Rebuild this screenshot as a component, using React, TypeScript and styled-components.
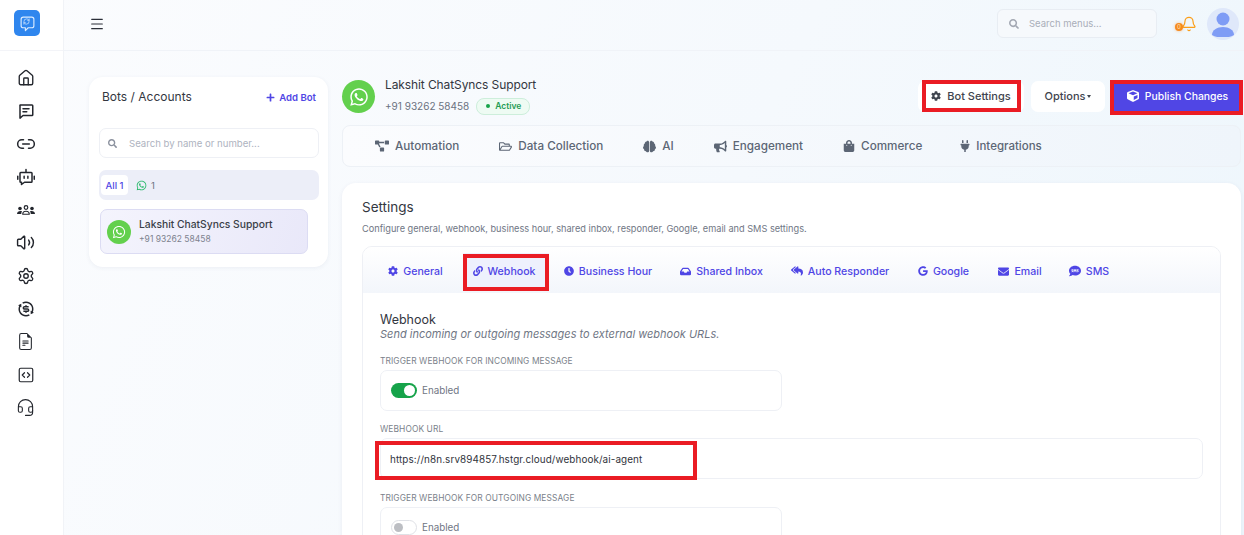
import styled, { createGlobalStyle } from "styled-components";
import { House, Link2, Volume2, Settings as Gear, SquareCode, Headset, Bell, Menu, RefreshCw } from "lucide-react";
import { RiExchangeDollarLine } from "react-icons/ri";
import { BsFileEarmarkText } from "react-icons/bs";
import {
  FaBrain, FaBullhorn, FaClock, FaCog, FaCube, FaEnvelope, FaGoogle, FaInbox, FaLink, FaPlug,
  FaPlus, FaProjectDiagram, FaRegFolderOpen, FaReplyAll, FaSearch, FaShoppingBag, FaSms, FaWhatsapp,
} from "react-icons/fa";

const Global = createGlobalStyle`
  html, body { margin: 0; height: 100%; overflow: hidden; }
  body { font-family: "Inter", "Liberation Sans", sans-serif; color: #2b2f38; }
  #root { height: 100%; }
`;

const Page = styled.div`
  display: flex;
  height: 535px;
  overflow: hidden;
  background: linear-gradient(115deg, #fbfcfe 0%, #f5f9fd 55%, #edf6fc 100%);
`;

const Sidebar = styled.aside`
  width: 63px;
  flex: none;
  background: #fff;
  border-right: 1px solid #f1f3f7;
  display: flex;
  flex-direction: column;
  align-items: center;
`;

const LogoRow = styled.div`
  height: 51px;
  width: 100%;
  box-sizing: border-box;
  display: flex;
  justify-content: flex-start;
  padding: 10px 0 0 14px;
  border-bottom: 1px solid #f3f4f8;
`;

const Logo = styled.div`
  position: relative;
  width: 26px;
  height: 26px;
  border-radius: 5px;
  background: #2f86ee;
  color: #dcecff;
  display: flex;
  align-items: center;
  justify-content: center;
`;

const LogoInner = styled.span`
  position: absolute;
  left: 9px;
  top: 8px;
  display: flex;
  color: #dcecff;
`;

const SideNav = styled.nav`
  display: flex;
  flex-direction: column;
  align-items: center;
  padding-top: 10px;
  margin-right: 12px;
  color: #23262d;
`;

const SideItem = styled.div`
  height: 33px;
  display: flex;
  align-items: center;
  justify-content: center;
`;

const Main = styled.div`
  flex: 1;
  min-width: 0;
  display: flex;
  flex-direction: column;
`;

const Topbar = styled.header`
  height: 51px;
  flex: none;
  box-sizing: border-box;
  border-bottom: 1px solid #f0f3f8;
  display: flex;
  align-items: center;
  padding: 0 5px 3px 25px;
  color: #2b2f38;
`;

const Spacer = styled.div`
  flex: 1;
`;

const TopSearch = styled.div`
  width: 160px;
  height: 29px;
  box-sizing: border-box;
  background: #f6f9fc;
  border: 1px solid #e8edf3;
  border-radius: 6px;
  display: flex;
  align-items: center;
  gap: 10px;
  padding-left: 11px;
  font-size: 9.5px;
  color: #a9aeb9;
  margin-right: 18px;
`;

const BellWrap = styled.div`
  position: relative;
  width: 22px;
  height: 16px;
  color: #fb9f1a;
  margin-right: 10px;
  display: flex;
  justify-content: flex-end;
`;

const BellCount = styled.span`
  position: absolute;
  left: 0;
  top: 7px;
  width: 8px;
  height: 8px;
  border-radius: 50%;
  background: #f58a1f;
  box-shadow: 0 0 3px rgba(245, 138, 31, 0.5);
  color: #ffe3b8;
  font-size: 6px;
  line-height: 8px;
  text-align: center;
`;

const TopAvatar = styled.div`
  width: 32px;
  height: 32px;
  border-radius: 50%;
  background: #dfe8fa;
  display: flex;
  align-items: center;
  justify-content: center;
`;

const Content = styled.main`
  display: flex;
  align-items: flex-start;
  gap: 14px;
  padding: 26px 3px 0 25px;
`;

const BotsCard = styled.section`
  width: 239px;
  flex: none;
  box-sizing: border-box;
  height: 190px;
  background: #fff;
  border-radius: 14px;
  box-shadow: 0 1px 4px rgba(60, 70, 110, 0.07);
  padding: 12px 9px 12px 10px;
`;

const BotsHead = styled.div`
  display: flex;
  justify-content: space-between;
  align-items: flex-start;
  padding: 0 3px;
  height: 39px;
`;

const BotsTitle = styled.h2`
  margin: 0;
  font-size: 12px;
  font-weight: 400;
  line-height: 16px;
  color: #33373f;
`;

const AddBot = styled.a`
  display: flex;
  align-items: center;
  gap: 4px;
  font-size: 9.6px;
  font-weight: 600;
  color: #4f46e5;
  padding-top: 3px;
`;

const BotSearch = styled.div`
  height: 30px;
  box-sizing: border-box;
  border: 1px solid #eef0f5;
  border-radius: 7px;
  display: flex;
  align-items: center;
  gap: 12px;
  padding-left: 8px;
  font-size: 9.6px;
  color: #aeb3c0;
  margin-bottom: 12px;
`;

const FilterBar = styled.div`
  height: 30px;
  box-sizing: border-box;
  background: #eceef8;
  border-radius: 7px;
  display: flex;
  align-items: center;
  gap: 8px;
  padding: 0 2px;
  font-size: 9.5px;
  color: #6b7280;
  margin-bottom: 9px;
`;

const FilterAll = styled.span`
  width: 27px;
  height: 20px;
  border-radius: 4px;
  background: #fff;
  color: #4f46e5;
  font-weight: 500;
  display: flex;
  align-items: center;
  justify-content: center;
`;

const FilterCount = styled.span`
  display: flex;
  align-items: center;
  gap: 4px;
`;

const BotRow = styled.div`
  width: 208px;
  height: 45px;
  margin-left: 1px;
  box-sizing: border-box;
  border: 1px solid #dcdcf3;
  border-radius: 7px;
  background: linear-gradient(110deg, #f4f4fd, #e9e8f9);
  display: flex;
  align-items: center;
  gap: 8px;
  padding-left: 6px;
`;

const WaCircle = styled.div<{ $size: number }>`
  width: ${(p) => p.$size}px;
  height: ${(p) => p.$size}px;
  flex: none;
  border-radius: 50%;
  background: #63d04d;
  color: #fff;
  display: flex;
  align-items: center;
  justify-content: center;
`;

const BotName = styled.div`
  font-size: 10.3px;
  font-weight: 500;
  color: #3a3e48;
  line-height: 14px;
`;

const BotPhone = styled.div`
  font-size: 8.5px;
  color: #7d828e;
  line-height: 14px;
  margin-top: 1px;
`;

const RightCol = styled.div`
  flex: 1;
  min-width: 0;
`;

const HeaderRow = styled.div`
  display: flex;
  align-items: center;
  height: 37px;
  margin-top: 1px;
  margin-bottom: 10px;
  gap: 10px;
`;

const HeadText = styled.div`
  padding-bottom: 2px;
`;

const HeadName = styled.div`
  font-size: 12px;
  color: #33373f;
  line-height: 16px;
  letter-spacing: -0.1px;
`;

const HeadMeta = styled.div`
  display: flex;
  align-items: center;
  gap: 7px;
  font-size: 10px;
  color: #6b7280;
  margin-top: 5px;
`;

const ActiveBadge = styled.span`
  display: inline-flex;
  align-items: center;
  gap: 5px;
  height: 15px;
  padding: 0 8px 0 9px;
  border: 1px solid #cdeedb;
  border-radius: 8px;
  background: #eefbf3;
  color: #1f9d55;
  font-size: 8.5px;
  font-weight: 600;
`;

const Dot = styled.span`
  width: 4px;
  height: 4px;
  border-radius: 50%;
  background: #16a34a;
`;

const Actions = styled.div`
  display: flex;
  align-items: center;
  gap: 7px;
  margin: -1px 1px 0 auto;
`;

const WhiteBtn = styled.button`
  height: 31px;
  border: 0;
  border-radius: 7px;
  background: #fff;
  font: inherit;
  font-size: 11px;
  font-weight: 500;
  color: #3f444e;
  display: flex;
  align-items: center;
  justify-content: center;
  gap: 6px;
  position: relative;
  padding: 0;
`;

const SettingsBtn = styled(WhiteBtn)`
  width: 106px;
`;

const OptionsBtn = styled(WhiteBtn)`
  width: 74px;
`;

const Caret = styled.span`
  width: 0;
  height: 0;
  border-left: 2.5px solid transparent;
  border-right: 2.5px solid transparent;
  border-top: 3px solid #3f444e;
  margin-left: -4px;
`;

const PublishBtn = styled.button`
  width: 127px;
  height: 29px;
  margin-left: 1px;
  padding: 0 0 0 2px;
  border: 0;
  background: #5046e5;
  color: #fff;
  font: inherit;
  font-size: 10.4px;
  font-weight: 500;
  display: flex;
  align-items: center;
  justify-content: center;
  gap: 6px;
  position: relative;
`;

const RedBox = styled.span<{ $t: number; $r: number; $b: number; $l: number }>`
  position: absolute;
  top: ${(p) => p.$t}px;
  right: ${(p) => p.$r}px;
  bottom: ${(p) => p.$b}px;
  left: ${(p) => p.$l}px;
  border: 4px solid #ea1c24;
  pointer-events: none;
`;

const SubNav = styled.nav`
  height: 42px;
  box-sizing: border-box;
  border: 1px solid #edf1f6;
  border-radius: 8px;
  background: linear-gradient(90deg, #fbfcfe, #eff5fb);
  display: flex;
  align-items: center;
  gap: 40px;
  padding-left: 32px;
  margin-bottom: 16px;
`;

const SubItem = styled.span`
  display: flex;
  align-items: center;
  gap: 6px;
  font-size: 11.7px;
  font-weight: 500;
  color: #5c6675;

  &:last-child {
    margin-left: -3px;
    font-size: 11.5px;
    gap: 5px;
  }
`;

const SettingsCard = styled.section`
  background: #fff;
  border-radius: 14px 14px 0 0;
  box-shadow: 0 1px 4px rgba(60, 70, 110, 0.08);
  padding: 16px 20px 0;
  height: 360px;
  box-sizing: border-box;
`;

const CardTitle = styled.h2`
  margin: 0;
  font-size: 13.5px;
  font-weight: 400;
  color: #33373f;
  line-height: 17px;
`;

const CardDesc = styled.p`
  margin: 6px 0 11px;
  font-size: 9.2px;
  line-height: 13px;
  color: #6f7684;
`;

const Inner = styled.div`
  border: 1px solid #eef0f5;
  border-radius: 10px 10px 0 0;
  overflow: hidden;
`;

const Tabs = styled.div`
  height: 46px;
  background: linear-gradient(180deg, #fff, #f3f6fb);
  display: flex;
  align-items: center;
  padding-left: 5px;
`;

const Tab = styled.span<{ $w: number; $active?: boolean }>`
  position: relative;
  width: ${(p) => p.$w}px;
  height: 100%;
  box-sizing: border-box;
  flex: none;
  display: flex;
  align-items: center;
  justify-content: center;
  gap: 5px;
  padding: 2px ${(p) => (p.$active ? 4 : 0)}px 0 0;
  font-size: 10.6px;
  font-weight: 500;
  color: #4f46e5;
  background: ${(p) => (p.$active ? "linear-gradient(#eef1fd, #eef1fd) center / 100% 34px no-repeat" : "none")};
`;

const Pane = styled.div`
  padding: 19px 17px 0 17px;
`;

const PaneTitle = styled.h3`
  margin: 0;
  font-size: 12.5px;
  font-weight: 400;
  line-height: 15px;
  color: #33373f;
`;

const PaneDesc = styled.p`
  margin: 0 0 15px;
  font-size: 11px;
  font-style: italic;
  line-height: 14px;
  color: #6f7684;
`;

const FieldLabel = styled.label`
  display: block;
  font-size: 8.4px;
  line-height: 11px;
  letter-spacing: 0.1px;
  color: #7a7f8a;
  text-transform: uppercase;
  margin-bottom: 3px;
`;

const ToggleBox = styled.div`
  width: 402px;
  height: 41px;
  box-sizing: border-box;
  border: 1px solid #eef0f5;
  border-radius: 7px;
  display: flex;
  align-items: center;
  gap: 5px;
  padding-left: 10px;
  font-size: 9.8px;
  color: #6f7684;
  margin-bottom: 13px;
`;

const Toggle = styled.span<{ $on?: boolean }>`
  width: 26px;
  height: 15px;
  box-sizing: border-box;
  border-radius: 8px;
  padding: 2px;
  display: flex;
  justify-content: ${(p) => (p.$on ? "flex-end" : "flex-start")};
  background: ${(p) => (p.$on ? "#16a34a" : "#fff")};
  border: ${(p) => (p.$on ? "0" : "1px solid #dfe1e6")};

  &::after {
    content: "";
    width: ${(p) => (p.$on ? 11 : 9)}px;
    height: ${(p) => (p.$on ? 11 : 9)}px;
    border-radius: 50%;
    background: ${(p) => (p.$on ? "#fff" : "#bcbec3")};
  }
`;

const UrlInput = styled.div`
  position: relative;
  height: 41px;
  box-sizing: border-box;
  border: 1px solid #eef0f5;
  border-radius: 7px;
  display: flex;
  align-items: center;
  padding-left: 9px;
  font-size: 9.9px;
  color: #2f333b;
  letter-spacing: 0.1px;
  margin-bottom: 14px;
`;

const settingsTabs = [
  { label: "General", icon: <FaCog size={10} />, w: 95 },
  { label: "Webhook", icon: <FaLink size={10} />, w: 86, active: true },
  { label: "Business Hour", icon: <FaClock size={10} />, w: 118 },
  { label: "Shared Inbox", icon: <FaInbox size={11} />, w: 109 },
  { label: "Auto Responder", icon: <FaReplyAll size={12} />, w: 128 },
  { label: "Google", icon: <FaGoogle size={10} />, w: 79 },
  { label: "Email", icon: <FaEnvelope size={11} />, w: 74 },
  { label: "SMS", icon: <FaSms size={12} />, w: 64 },
];

const subItems = [
  { label: "Automation", icon: <FaProjectDiagram size={14} /> },
  { label: "Data Collection", icon: <FaRegFolderOpen size={13} /> },
  { label: "AI", icon: <FaBrain size={13} /> },
  { label: "Engagement", icon: <FaBullhorn size={13} /> },
  { label: "Commerce", icon: <FaShoppingBag size={12} /> },
  { label: "Integrations", icon: <FaPlug size={12} /> },
];

export default function App() {
  return (
    <>
      <Global />
      <Page>
        <Sidebar>
          <LogoRow>
            <Logo>
              <svg width="17" height="17" viewBox="0 0 24 24" fill="none" stroke="currentColor" strokeWidth="1.6" strokeLinejoin="round">
                <path d="M6 3h12a3 3 0 0 1 3 3v9a3 3 0 0 1-3 3h-5l-4 4v-4H6a3 3 0 0 1-3-3V6a3 3 0 0 1 3-3z" />
              </svg>
              <LogoInner>
                <RefreshCw size={7} strokeWidth={2.4} />
              </LogoInner>
            </Logo>
          </LogoRow>
          <SideNav>
            <SideItem><House size={18} strokeWidth={1.8} /></SideItem>
            <SideItem>
              <svg width="18" height="18" viewBox="0 0 24 24" fill="none" stroke="currentColor" strokeWidth="2" strokeLinejoin="round" strokeLinecap="round">
                <path d="M4 4h16a1 1 0 0 1 1 1v12a1 1 0 0 1-1 1H8l-4 3.5V5a1 1 0 0 1 0-1zM8 9h8M8 13h5" />
              </svg>
            </SideItem>
            <SideItem><Link2 size={20} strokeWidth={1.8} /></SideItem>
            <SideItem>
              <svg width="18" height="18" viewBox="0 0 24 24" fill="none" stroke="currentColor" strokeWidth="2" strokeLinejoin="round" strokeLinecap="round">
                <path d="M12 2v4M5 6h14a1 1 0 0 1 1 1v11a1 1 0 0 1-1 1H10l-4 3v-3H5a1 1 0 0 1-1-1V7a1 1 0 0 1 1-1zM1 11v4M23 11v4M9.5 11v2.5M14.5 11v2.5" />
              </svg>
            </SideItem>
            <SideItem>
              <svg width="18" height="10" viewBox="0 0 36 20" fill="currentColor">
                <circle cx="18" cy="5" r="3.6" fill="none" stroke="currentColor" strokeWidth="2.4" />
                <circle cx="6" cy="7" r="3.6" />
                <circle cx="30" cy="7" r="3.6" />
                <path d="M0 18c0-4 3-6 7-6 1 0 2 .2 3 .6-1 1.400-1.500 3.400-1.500 5.400zM36 18c0-4-3-6-7-6-1 0-2 .2-3 .6 1 1.400 1.500 3.400 1.500 5.400z" />
                <path d="M11.500 18.500c0-4 2.500-6 6.500-6s6.500 2 6.500 6z" fill="none" stroke="currentColor" strokeWidth="2.4" strokeLinejoin="round" />
              </svg>
            </SideItem>
            <SideItem><Volume2 size={19} strokeWidth={1.8} /></SideItem>
            <SideItem><Gear size={18} strokeWidth={1.8} /></SideItem>
            <SideItem><RiExchangeDollarLine size={18} /></SideItem>
            <SideItem><BsFileEarmarkText size={17} /></SideItem>
            <SideItem><SquareCode size={18} strokeWidth={1.6} /></SideItem>
            <SideItem><Headset size={19} strokeWidth={1.4} /></SideItem>
          </SideNav>
        </Sidebar>
        <Main>
          <Topbar>
            <Menu size={16} strokeWidth={1.7} />
            <Spacer />
            <TopSearch>
              <FaSearch size={10} color="#a3a8b3" />
              Search menus...
            </TopSearch>
            <BellWrap>
              <Bell size={16} strokeWidth={1.8} />
              <BellCount>0</BellCount>
            </BellWrap>
            <TopAvatar>
              <svg width="24" height="26" viewBox="0 0 24 26" fill="#7f9cf5">
                <circle cx="12" cy="8" r="6.5" />
                <path d="M1 24c0-5 5-8 11-8s11 3 11 8c-3 2-7 2.500-11 2.500S4 26 1 24z" />
              </svg>
            </TopAvatar>
          </Topbar>
          <Content>
            <BotsCard>
              <BotsHead>
                <BotsTitle>Bots / Accounts</BotsTitle>
                <AddBot><FaPlus size={9} />Add Bot</AddBot>
              </BotsHead>
              <BotSearch>
                <FaSearch size={9} color="#8b919e" />
                Search by name or number...
              </BotSearch>
              <FilterBar>
                <FilterAll>All 1</FilterAll>
                <FilterCount><FaWhatsapp size={11} color="#25b868" />1</FilterCount>
              </FilterBar>
              <BotRow>
                <WaCircle $size={24}><FaWhatsapp size={14} /></WaCircle>
                <div>
                  <BotName>Lakshit ChatSyncs Support</BotName>
                  <BotPhone>+91 93262 58458</BotPhone>
                </div>
              </BotRow>
            </BotsCard>
            <RightCol>
              <HeaderRow>
                <WaCircle $size={33}><FaWhatsapp size={20} /></WaCircle>
                <HeadText>
                  <HeadName>Lakshit ChatSyncs Support</HeadName>
                  <HeadMeta>
                    +91 93262 58458
                    <ActiveBadge><Dot />Active</ActiveBadge>
                  </HeadMeta>
                </HeadText>
                <Actions>
                  <SettingsBtn>
                    <FaCog size={10} />Bot Settings
                    <RedBox $t={-1} $r={3} $b={0} $l={4} />
                  </SettingsBtn>
                  <OptionsBtn>Options<Caret /></OptionsBtn>
                  <PublishBtn>
                    <FaCube size={12} />Publish Changes
                    <RedBox $t={-2} $r={-3} $b={-4} $l={-3} />
                  </PublishBtn>
                </Actions>
              </HeaderRow>
              <SubNav>
                {subItems.map((s) => (
                  <SubItem key={s.label}>{s.icon}{s.label}</SubItem>
                ))}
              </SubNav>
              <SettingsCard>
                <CardTitle>Settings</CardTitle>
                <CardDesc>Configure general, webhook, business hour, shared inbox, responder, Google, email and SMS settings.</CardDesc>
                <Inner>
                  <Tabs>
                    {settingsTabs.map((t) => (
                      <Tab key={t.label} $w={t.w} $active={t.active}>
                        {t.icon}{t.label}
                        {t.active && <RedBox $t={7} $r={0} $b={2} $l={0} />}
                      </Tab>
                    ))}
                  </Tabs>
                  <Pane>
                    <PaneTitle>Webhook</PaneTitle>
                    <PaneDesc>Send incoming or outgoing messages to external webhook URLs.</PaneDesc>
                    <FieldLabel>Trigger webhook for incoming message</FieldLabel>
                    <ToggleBox><Toggle $on />Enabled</ToggleBox>
                    <FieldLabel>Webhook URL</FieldLabel>
                    <UrlInput>
                      https://n8n.srv894857.hstgr.cloud/webhook/ai-agent
                      <RedBox $t={2} $r={505} $b={-2} $l={-6} />
                    </UrlInput>
                    <FieldLabel>Trigger webhook for outgoing message</FieldLabel>
                    <ToggleBox><Toggle />Enabled</ToggleBox>
                  </Pane>
                </Inner>
              </SettingsCard>
            </RightCol>
          </Content>
        </Main>
      </Page>
    </>
  );
}
